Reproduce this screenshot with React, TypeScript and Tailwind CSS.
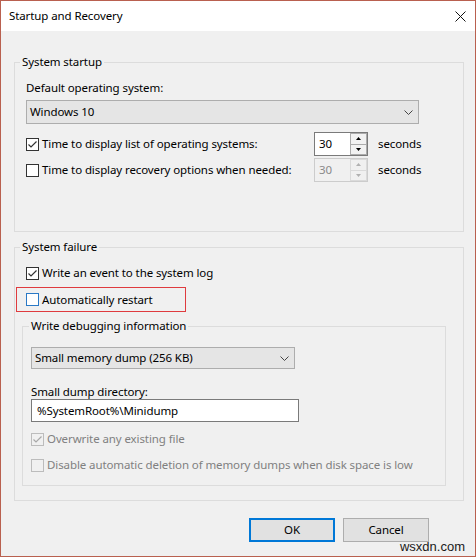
import React from "react"

type CheckProps = { checked?: boolean; disabled?: boolean; focused?: boolean }

function CheckBox({ checked, disabled, focused }: CheckProps) {
  const box = disabled
    ? "border-[#bcbcbc] bg-[#f0f0f0]"
    : focused
      ? "border-[#2a79c6] bg-white"
      : "border-[#333333] bg-white"
  return (
    <span className={`flex h-[13px] w-[13px] shrink-0 items-center justify-center border ${box}`}>
      {checked && (
        <svg width="11" height="11" viewBox="0 0 11 11">
          <polyline
            points="1.5,5.5 4,8 9.5,2.5"
            fill="none"
            stroke={disabled ? "#a8a8a8" : "#333333"}
            strokeWidth="1.2"
          />
        </svg>
      )}
    </span>
  )
}

function Row({ label, checked, disabled }: { label: string; checked?: boolean; disabled?: boolean }) {
  return (
    <div className="flex h-[24px] items-center">
      <CheckBox checked={checked} disabled={disabled} />
      <span className={`ml-[3px] ${disabled ? "text-[#808080]" : ""}`}>{label}</span>
    </div>
  )
}

function Chevron() {
  return (
    <svg width="9" height="5" viewBox="0 0 9 5">
      <polyline points="0.5,0.5 4.5,4.5 8.5,0.5" fill="none" stroke="#444444" strokeWidth="1" />
    </svg>
  )
}

function Arrow({ up, disabled }: { up?: boolean; disabled?: boolean }) {
  return (
    <svg width="5" height="3" viewBox="0 0 5 3">
      <polygon points={up ? "0,3 2.5,0 5,3" : "0,0 2.5,3 5,0"} fill={disabled ? "#b0b0b0" : "#000000"} />
    </svg>
  )
}

function Spinner({ disabled }: { disabled?: boolean }) {
  const btn = disabled ? "border-[#dadada] bg-[#f0f0f0]" : "border-[#acacac] bg-[#f2f2f2]"
  return (
    <div
      className={`flex h-[24px] w-[54px] border ${
        disabled ? "border-[#cccccc] bg-[#f0f0f0] text-[#8a8a8a]" : "border-[#7a7a7a] bg-white"
      }`}
    >
      <span className="flex-1 pl-[4px] leading-[22px]">30</span>
      <div className="flex w-[17px] flex-col">
        <div className={`flex flex-1 items-center justify-center border ${btn}`}>
          <Arrow up disabled={disabled} />
        </div>
        <div className={`flex flex-1 items-center justify-center border border-t-0 ${btn}`}>
          <Arrow disabled={disabled} />
        </div>
      </div>
    </div>
  )
}

function SpinRow({ label, checked, disabled }: { label: string; checked?: boolean; disabled?: boolean }) {
  return (
    <div className="flex h-[24px] items-center">
      <div className="flex w-[288px] items-center">
        <CheckBox checked={checked} />
        <span className="ml-[3px]">{label}</span>
      </div>
      <Spinner disabled={disabled} />
      <span className="ml-[10px]">seconds</span>
    </div>
  )
}

export default function App() {
  return (
    <div className="relative flex h-[557px] w-[476px] flex-col border border-[#b9604f] bg-[#f0f0f0] font-['Noto_Sans','Open_Sans',sans-serif] text-[11.5px] leading-[16px] tracking-[-0.1px] text-black">
      {/* Title bar */}
      <div className="flex h-[30px] shrink-0 items-center justify-between bg-white pl-[8px] pr-[9px]">
        <span>Startup and Recovery</span>
        <svg width="11" height="11" viewBox="0 0 11 11">
          <path d="M0.5 0.5 L10.5 10.5 M10.5 0.5 L0.5 10.5" stroke="#111111" strokeWidth="1" />
        </svg>
      </div>

      {/* System startup */}
      <fieldset className="ml-[13px] mr-[11px] mt-[23px] border border-[#dcdcdc]">
        <legend className="ml-[5px] px-[2px] leading-[16px]">System startup</legend>
        <div className="pb-[49px] pl-[11px] pt-[10px]">
          <div>Default operating system:</div>
          <div className="mt-[4px] flex h-[24px] w-[393px] items-center justify-between border border-[#adadad] bg-[#e5e5e5] pl-[3px] pr-[5px]">
            <span>Windows 10</span>
            <Chevron />
          </div>
          <div className="mt-[8px]">
            <SpinRow label="Time to display list of operating systems:" checked />
          </div>
          <div className="mt-[2px]">
            <SpinRow label="Time to display recovery options when needed:" disabled />
          </div>
        </div>
      </fieldset>

      {/* System failure */}
      <fieldset className="ml-[13px] mr-[11px] mt-[7px] border border-[#dcdcdc]">
        <legend className="ml-[5px] px-[2px] leading-[16px]">System failure</legend>
        <div className="pb-[14px] pt-[6px]">
          <div className="pl-[11px]">
            <Row label="Write an event to the system log" checked />
          </div>
          <div className="ml-[1px] mt-[2px] flex h-[25px] w-[170px] items-center border border-[#df3b3e] pl-[9px]">
            <CheckBox focused />
            <span className="ml-[3px]">Automatically restart</span>
          </div>

          <fieldset className="ml-[7px] mt-[6px] w-[424px] border border-[#dcdcdc]">
            <legend className="ml-[6px] px-[2px] leading-[16px]">Write debugging information</legend>
            <div className="pb-[8px] pl-[8px] pt-[13px]">
              <div className="flex h-[22px] w-[264px] items-center justify-between border border-[#adadad] bg-[#e5e5e5] pl-[3px] pr-[5px]">
                <span>Small memory dump (256 KB)</span>
                <Chevron />
              </div>
              <div className="mt-[16px] leading-[14px]">Small dump directory:</div>
              <div className="flex h-[23px] w-[268px] items-center border border-[#7a7a7a] bg-white pl-[5px]">
                %SystemRoot%\Minidump
              </div>
              <div className="mt-[5px]">
                <Row label="Overwrite any existing file" checked disabled />
              </div>
              <div className="mt-[2px]">
                <Row label="Disable automatic deletion of memory dumps when disk space is low" disabled />
              </div>
            </div>
          </fieldset>
        </div>
      </fieldset>

      {/* Buttons */}
      <div className="mt-[17px] flex justify-end gap-[8px] pr-[46px]">
        <button className="h-[24px] w-[86px] border-2 border-[#0078d7] bg-[#e1e1e1]">OK</button>
        <button className="h-[24px] w-[86px] border border-[#adadad] bg-[#e1e1e1]">Cancel</button>
      </div>

      <span className="absolute bottom-[1px] right-[10px] font-['Liberation_Sans',Arial,sans-serif] text-[13px] leading-[16px] tracking-normal text-[#1a1a1a]">
        wsxdn.com
      </span>
    </div>
  )
}
